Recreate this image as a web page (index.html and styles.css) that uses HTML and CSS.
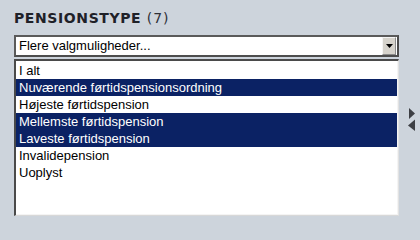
FILE: index.html
```html
<!DOCTYPE html>
<html lang="da">
<head>
<meta charset="utf-8">
<title>Pensionstype</title>
<link rel="stylesheet" href="styles.css">
</head>
<body>
<div class="panel">
  <div class="main">
    <h2 class="title">PENSIONSTYPE <span class="count">(7)</span></h2>
    <div class="combo">
      <span class="combo-text">Flere valgmuligheder...</span>
      <span class="combo-btn">
        <svg width="7" height="4" viewBox="0 0 7 4"><polygon points="0,0 7,0 3.5,4" fill="#000"/></svg>
      </span>
    </div>
    <ul class="list">
      <li class="item">I alt</li>
      <li class="item selected">Nuværende førtidspensionsordning</li>
      <li class="item">Højeste førtidspension</li>
      <li class="item selected">Mellemste førtidspension</li>
      <li class="item selected">Laveste førtidspension</li>
      <li class="item">Invalidepension</li>
      <li class="item">Uoplyst</li>
    </ul>
  </div>
  <div class="side">
    <svg class="toggle" width="8" height="23" viewBox="0 0 8 23">
      <polygon points="1,0 7,5.5 1,11" fill="#3d3f44"/>
      <polygon points="7,11.5 7,23 0,17.5" fill="#3d3f44"/>
    </svg>
  </div>
</div>
</body>
</html>
```
FILE: styles.css
```css
html, body {
  margin: 0;
  padding: 0;
}
body {
  background: #cdd4dc;
  width: 420px;
  height: 221px;
  overflow: hidden;
}
.panel {
  display: flex;
  padding: 10px 0 0 14px;
}
.main {
  width: 385px;
  display: flex;
  flex-direction: column;
}
.title {
  margin: 0 0 9px 0;
  font-family: "DejaVu Sans", Verdana, sans-serif;
  font-size: 14px;
  line-height: 16px;
  font-weight: bold;
  letter-spacing: 0.6px;
  color: #1f2128;
}
.count {
  font-weight: normal;
  color: #2e3038;
  letter-spacing: 1px;
}
.combo {
  height: 18px;
  display: flex;
  align-items: stretch;
  background: #fff;
  border: 2px solid #4d4d4d;
  border-top-color: #5a5a5a;
  border-left-color: #5a5a5a;
}
.combo-text {
  flex: 1;
  font-family: "Liberation Sans", Arial, sans-serif;
  font-size: 13px;
  line-height: 18px;
  padding-left: 3px;
  color: #000;
}
.combo-btn {
  width: 14px;
  margin-right: 1px;
  display: flex;
  align-items: center;
  justify-content: center;
  background: #d6d3cc;
  border-top: 1px solid #f4f4f4;
  border-left: 1px solid #f4f4f4;
  border-right: 1px solid #8a8a8a;
  border-bottom: 1px solid #8a8a8a;
  box-sizing: border-box;
}
.list {
  margin: 2px 0 0 0;
  padding: 1px 1px 0 0;
  list-style: none;
  height: 153px;
  background: #fff;
  border-top: 2px solid #4a4a4a;
  border-left: 2px solid #4a4a4a;
  border-right: 1px solid #e2e2e2;
  border-bottom: 1px solid #d8d8d8;
  box-shadow: inset 0 -1px 0 #f4f4f4, inset -1px 0 0 #f4f4f4;
  font-family: "Liberation Sans", Arial, sans-serif;
  font-size: 13px;
}
.item {
  height: 17px;
  line-height: 17px;
  padding-left: 3px;
  color: #000;
  white-space: nowrap;
}
.item.selected {
  background: #0b2264;
  color: #fff;
}
.side {
  padding: 98px 0 0 9px;
}
.toggle {
  display: block;
}
```
